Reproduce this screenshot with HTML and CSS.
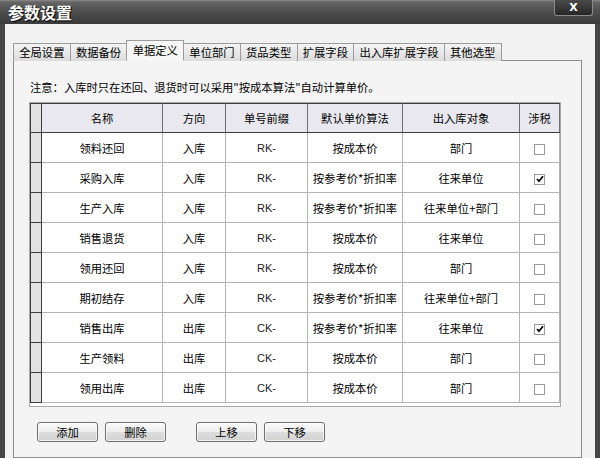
FILE: index.html
```html
<!DOCTYPE html>
<html>
<head>
<meta charset="utf-8">
<link rel="stylesheet" href="styles.css">
</head>
<body>
<div class="window">
  <div class="titlebar">
    <span class="title">参数设置</span>
    <span class="close">X</span>
  </div>
  <div class="frame">
    <div class="tabs">
      <span class="tab">全局设置</span>
      <span class="tab">数据备份</span>
      <span class="tab active">单据定义</span>
      <span class="tab">单位部门</span>
      <span class="tab">货品类型</span>
      <span class="tab">扩展字段</span>
      <span class="tab">出入库扩展字段</span>
      <span class="tab">其他选型</span>
    </div>
    <div class="panel">
      <p class="note">注意：入库时只在还回、退货时可以采用"按成本算法"自动计算单价。</p>
      <div class="grid-wrap">
        <table class="grid">
          <colgroup>
            <col class="c-ind"><col class="c-name"><col class="c-dir"><col class="c-pre"><col class="c-alg"><col class="c-obj"><col class="c-tax">
          </colgroup>
          <tr class="head">
            <th class="ind"></th><th>名称</th><th>方向</th><th>单号前缀</th><th>默认单价算法</th><th>出入库对象</th><th>涉税</th>
          </tr>
          <tr><td class="ind"></td><td>领料还回</td><td>入库</td><td class="pre">RK-</td><td>按成本价</td><td>部门</td><td><span class="cb"></span></td></tr>
          <tr><td class="ind"></td><td>采购入库</td><td>入库</td><td class="pre">RK-</td><td>按参考价*折扣率</td><td>往来单位</td><td><span class="cb"><svg width="8" height="8" viewBox="0 0 8 8"><path d="M1 4 L3 6.2 L7 1.3" fill="none" stroke="#000" stroke-width="1.8"/></svg></span></td></tr>
          <tr><td class="ind"></td><td>生产入库</td><td>入库</td><td class="pre">RK-</td><td>按参考价*折扣率</td><td>往来单位+部门</td><td><span class="cb"></span></td></tr>
          <tr><td class="ind"></td><td>销售退货</td><td>入库</td><td class="pre">RK-</td><td>按成本价</td><td>往来单位</td><td><span class="cb"></span></td></tr>
          <tr><td class="ind"></td><td>领用还回</td><td>入库</td><td class="pre">RK-</td><td>按成本价</td><td>部门</td><td><span class="cb"></span></td></tr>
          <tr><td class="ind"></td><td>期初结存</td><td>入库</td><td class="pre">RK-</td><td>按参考价*折扣率</td><td>往来单位+部门</td><td><span class="cb"></span></td></tr>
          <tr><td class="ind"></td><td>销售出库</td><td>出库</td><td class="pre">CK-</td><td>按参考价*折扣率</td><td>往来单位</td><td><span class="cb"><svg width="8" height="8" viewBox="0 0 8 8"><path d="M1 4 L3 6.2 L7 1.3" fill="none" stroke="#000" stroke-width="1.8"/></svg></span></td></tr>
          <tr><td class="ind"></td><td>生产领料</td><td>出库</td><td class="pre">CK-</td><td>按成本价</td><td>部门</td><td><span class="cb"></span></td></tr>
          <tr><td class="ind"></td><td>领用出库</td><td>出库</td><td class="pre">CK-</td><td>按成本价</td><td>部门</td><td><span class="cb"></span></td></tr>
        </table>
      </div>
      <div class="buttons">
        <button class="btn">添加</button>
        <button class="btn">删除</button>
        <button class="btn gap">上移</button>
        <button class="btn">下移</button>
      </div>
    </div>
  </div>
</div>
</body>
</html>
```
FILE: styles.css
```css
html, body {
  margin: 0;
  padding: 0;
  width: 600px;
  height: 458px;
  overflow: hidden;
  background: #f2f2f2;
  font-family: "Noto Sans CJK SC", "Liberation Sans", sans-serif;
  font-size: 11.3px;
  color: #000;
}

.window {
  display: flex;
  flex-direction: column;
  height: 458px;
}

.titlebar {
  height: 24px;
  flex: none;
  display: flex;
  justify-content: space-between;
  align-items: flex-start;
  padding: 0 7px 0 8px;
  background: linear-gradient(#8a8a8a 0, #666 2px, #555 8px, #464646 16px, #3a3a3a 24px);
}

.title {
  color: #fff;
  font-weight: bold;
  font-size: 16px;
  line-height: 24px;
  text-shadow: 1px 1px 1px #000;
}

.close {
  width: 37px;
  height: 15px;
  border: 1px solid #8a8a8a;
  border-top: none;
  border-radius: 0 0 3px 3px;
  background: linear-gradient(#4a4a4a, #262626);
  color: #fff;
  font-family: "DejaVu Sans", sans-serif;
  font-weight: bold;
  font-size: 11px;
  line-height: 15px;
  text-align: center;
}

.frame {
  flex: 1;
  display: flex;
  flex-direction: column;
  border-left: 5px solid #454545;
  border-right: 5px solid #454545;
  padding: 17px 13px 0 8px;
  background: #f2f2f2;
}

.tabs {
  display: flex;
  align-items: flex-end;
  height: 20px;
  margin-bottom: -1px;
  position: relative;
  z-index: 1;
}

.tab {
  height: 17px;
  line-height: 17px;
  padding: 0 5.25px;
  margin-right: -1px;
  border: 1px solid #9c9c9c;
  border-bottom: none;
  background: linear-gradient(#f4f4f4, #dcdcdc);
  white-space: nowrap;
}

.tab.active {
  height: 19px;
  line-height: 19px;
  background: #f6f6f6;
  border-bottom: 1px solid #f4f4f4;
  position: relative;
  z-index: 2;
}

.panel {
  flex: 1;
  border: 1px solid #8c8c8c;
  background: #f4f4f4;
  padding: 18px 0 0 15px;
}

.note {
  margin: 0 0 7px 1px;
  line-height: 16px;
  white-space: nowrap;
}

.grid-wrap {
  width: 530px;
  border: 1px solid #a8a8a8;
  background: #fff;
  padding-bottom: 3px;
}

.grid {
  border-collapse: separate;
  border-spacing: 0;
  table-layout: fixed;
  width: 530px;
}

.c-ind { width: 12px; }
.c-name { width: 121px; }
.c-dir { width: 63px; }
.c-pre { width: 82px; }
.c-alg { width: 95px; }
.c-obj { width: 117px; }
.c-tax { width: 40px; }

.grid tr {
  height: 30px;
}

.grid th, .grid td {
  box-sizing: border-box;
  padding: 0;
  text-align: center;
  vertical-align: middle;
  font-weight: normal;
  white-space: nowrap;
  border-right: 1px solid #b4b4b4;
  border-bottom: 1px solid #b4b4b4;
}

.grid th {
  background: #e9e8ee;
  border-top: 1px solid #3c3c3c;
  border-bottom: 1px solid #3c3c3c;
  border-right: 1px solid #6e6e6e;
}

.grid .ind {
  background: #e2e2e2;
  border-left: 1px solid #3c3c3c;
  border-right: 1px solid #3c3c3c;
  border-bottom: 1px solid #3c3c3c;
}

.grid td.pre {
  font-family: "Liberation Sans", sans-serif;
  font-size: 11px;
  color: #222;
}

.cb {
  display: inline-flex;
  align-items: center;
  justify-content: center;
  width: 9px;
  height: 9px;
  border: 1px solid #9a9a9a;
  background: #fff;
  vertical-align: middle;
}

.buttons {
  display: flex;
  gap: 7px;
  margin-top: 15px;
  padding-left: 8px;
}

.btn {
  width: 61px;
  height: 20px;
  padding: 0;
  font-family: inherit;
  font-size: 11.3px;
  color: #000;
  border: 1px solid #6e6e6e;
  border-radius: 3px;
  background: linear-gradient(#fafafa, #ececec 50%, #dedede 51%, #d2d2d2);
  box-shadow: inset 0 0 0 1px rgba(255,255,255,0.7);
}

.btn.gap {
  margin-left: 23px;
}
```
